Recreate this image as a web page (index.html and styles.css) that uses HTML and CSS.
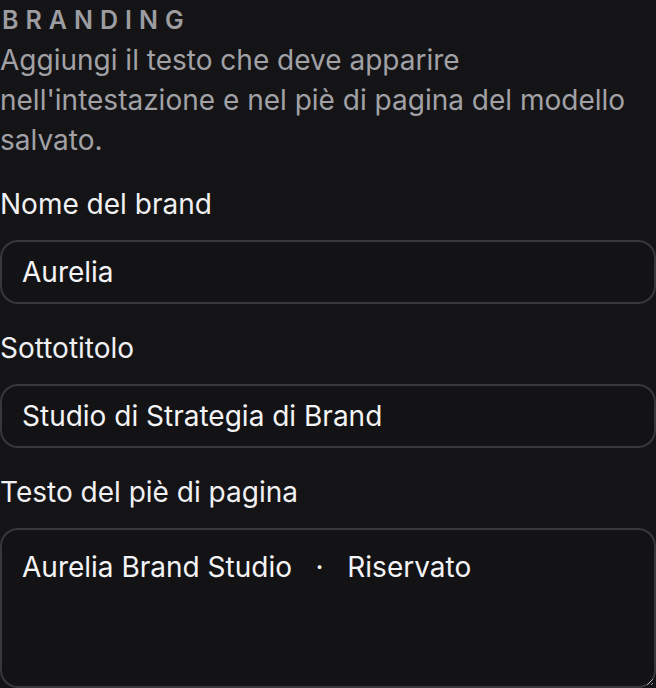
FILE: index.html
```html
<!DOCTYPE html>
<html lang="it">
<head>
  <meta charset="UTF-8" />
  <title>Branding</title>
  <link rel="stylesheet" href="styles.css">
</head>
<body>

<section class="branding">
  <h2 class="section-title">Branding</h2>
  <p class="section-desc">Aggiungi il testo che deve apparire nell'intestazione e nel piè di pagina del modello salvato.</p>

  <div class="field">
    <label for="brand-name">Nome del brand</label>
    <input type="text" id="brand-name" value="Aurelia" />
  </div>

  <div class="field">
    <label for="subtitle">Sottotitolo</label>
    <input type="text" id="subtitle" value="Studio di Strategia di Brand" />
  </div>

  <div class="field">
    <label for="footer-text">Testo del piè di pagina</label>
    <textarea id="footer-text" rows="3">Aurelia Brand Studio   ·   Riservato</textarea>
  </div>
</section>

</body>
</html>
```

FILE: styles.css
```css
body {
  margin: 0;
  background-color: #141416;
  color: #ececef;
  font-family: 'Inter', 'Noto Sans', sans-serif;
}

.branding {
  width: 656px;
}

.section-title {
  margin: 0;
  padding-top: 4px;
  padding-left: 2px;
  font-size: 25px;
  line-height: 32px;
  font-weight: 600;
  letter-spacing: 0.28em;
  text-transform: uppercase;
  color: #9c9ca1;
}

.section-desc {
  margin: 4px 0 0;
  font-size: 28px;
  line-height: 40px;
  color: #a1a1a6;
}

.field {
  display: flex;
  flex-direction: column;
  gap: 16px;
  margin-top: 24px;
}

.field label {
  font-size: 28px;
  line-height: 40px;
  color: #f0f0f2;
}

.field input,
.field textarea {
  box-sizing: border-box;
  width: 100%;
  margin: 0;
  border: 2px solid #38383c;
  border-radius: 18px;
  background-color: #131315;
  color: #f4f4f6;
  font-family: inherit;
  font-size: 28px;
  line-height: 40px;
  padding: 10px 20px;
  outline: none;
}

.field input {
  height: 64px;
}

.field textarea {
  height: 160px;
  padding-top: 17px;
  resize: vertical;
}
```
